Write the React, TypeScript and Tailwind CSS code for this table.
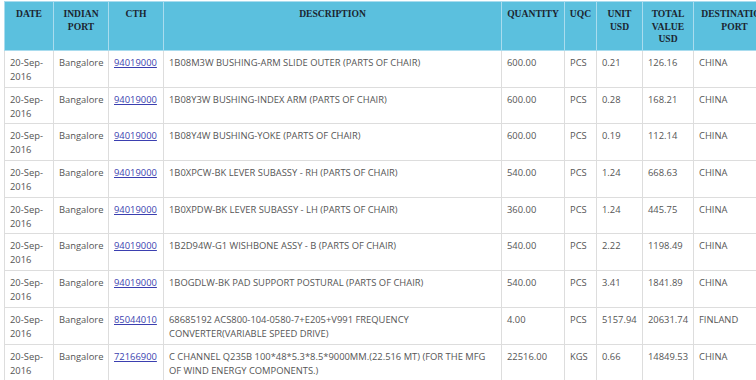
import React from "react";

const rows = [
  ["94019000", "1B08M3W BUSHING-ARM SLIDE OUTER (PARTS OF CHAIR)", "600.00", "PCS", "0.21", "126.16", "CHINA"],
  ["94019000", "1B08Y3W BUSHING-INDEX ARM (PARTS OF CHAIR)", "600.00", "PCS", "0.28", "168.21", "CHINA"],
  ["94019000", "1B08Y4W BUSHING-YOKE (PARTS OF CHAIR)", "600.00", "PCS", "0.19", "112.14", "CHINA"],
  ["94019000", "1B0XPCW-BK LEVER SUBASSY - RH (PARTS OF CHAIR)", "540.00", "PCS", "1.24", "668.63", "CHINA"],
  ["94019000", "1B0XPDW-BK LEVER SUBASSY - LH (PARTS OF CHAIR)", "360.00", "PCS", "1.24", "445.75", "CHINA"],
  ["94019000", "1B2D94W-G1 WISHBONE ASSY - B (PARTS OF CHAIR)", "540.00", "PCS", "2.22", "1198.49", "CHINA"],
  ["94019000", "1BOGDLW-BK PAD SUPPORT POSTURAL (PARTS OF CHAIR)", "540.00", "PCS", "3.41", "1841.89", "CHINA"],
  ["85044010", "68685192 ACS800-104-0580-7+E205+V991 FREQUENCY CONVERTER(VARIABLE SPEED DRIVE)", "4.00", "PCS", "5157.94", "20631.74", "FINLAND"],
  ["72166900", "C CHANNEL Q235B 100*48*5.3*8.5*9000MM.(22.516 MT) (FOR THE MFG OF WIND ENERGY COMPONENTS.)", "22516.00", "KGS", "0.66", "14849.53", "CHINA"],
];

const widths = [49, 55, 55, 338, 63, 32, 46, 51, 82];
const heads: string[][] = [
  ["DATE"],
  ["INDIAN", "PORT"],
  ["CTH"],
  ["DESCRIPTION"],
  ["QUANTITY"],
  ["UQC"],
  ["UNIT", "USD"],
  ["TOTAL", "VALUE", "USD"],
  ["DESTINATION", "PORT"],
];

const td =
  "border border-[#dddddd] align-top pl-[5px] pr-[2px] pt-[5px] text-[9.4px] leading-[14px] text-[#555]";

export default function App() {
  return (
    <div className="w-[756px] h-[380px] overflow-hidden bg-white pl-[4px] pt-[1px]">
      <table
        className="table-fixed border-collapse w-[771px]"
        style={{ fontFamily: '"Open Sans", sans-serif' }}
      >
        <colgroup>
          {widths.map((w, i) => (
            <col key={i} style={{ width: w }} />
          ))}
        </colgroup>
        <thead>
          <tr className="h-[49px]">
            {heads.map((h, i) => (
              <th
                key={i}
                className="bg-[#5bc0de] border border-[#a9dcee] align-top text-center px-[2px] pt-[6px] text-[9.6px] leading-[12.5px] font-bold text-[#1b2530] whitespace-nowrap"
                style={{ fontFamily: '"Liberation Serif", serif' }}
              >
                {h.map((l, j) => (
                  <div key={j}>{l}</div>
                ))}
              </th>
            ))}
          </tr>
        </thead>
        <tbody>
          {rows.map((r, i) => (
            <tr key={i} className="h-[36.7px]">
              <td className={td}>
                20-Sep-
                <br />
                2016
              </td>
              <td className={td}>Bangalore</td>
              <td className={td}>
                <a href="#" className="text-[#3b3fb0] underline">
                  {r[0]}
                </a>
              </td>
              {r.slice(1).map((c, j) => (
                <td key={j} className={td}>
                  {c}
                </td>
              ))}
            </tr>
          ))}
        </tbody>
      </table>
    </div>
  );
}
